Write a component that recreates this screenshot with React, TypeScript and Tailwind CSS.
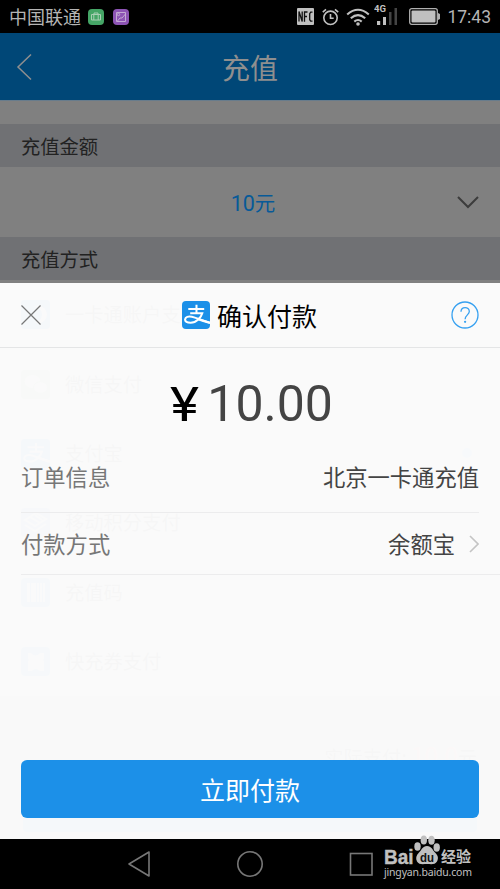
import type { ReactNode } from 'react'

function AlipayGlyph({ color = '#fff' }: { color?: string }) {
  return (
    <g fill="none" stroke={color}>
      <path strokeWidth="2.1" d="M6.500 8.300h16.500M15 4v8.500" />
      <path
        strokeWidth="2.1"
        d="M8.500 12.600H21c-1.200 4.200-6 10-12 10-3.800 0-6-1.300-5.800-3.600.3-2.400 3.300-3.600 7-2.700 5 1.200 10 3.700 18.800 6.200"
      />
      <path strokeWidth="2.500" d="M17 18.700c4 1.700 8 2.800 12 4" />
    </g>
  )
}

function Square({ className, children }: { className: string; children: ReactNode }) {
  return (
    <svg viewBox="0 0 29 29" className={`size-[29px] shrink-0 rounded ${className}`}>
      {children}
    </svg>
  )
}

const methods = [
  {
    name: '一卡通账户支付',
    icon: (
      <Square className="bg-[#004a80]">
        <circle cx="17" cy="14.500" r="9" fill="#808080" />
        <circle cx="13" cy="14.500" r="8" fill="#004a80" />
      </Square>
    ),
  },
  {
    name: '微信支付',
    icon: (
      <Square className="bg-[#4a7048]">
        <ellipse cx="11.500" cy="11.500" rx="8" ry="6.500" fill="#808080" />
        <ellipse cx="19.500" cy="17.500" rx="7" ry="5.800" fill="#808080" stroke="#4a7048" />
      </Square>
    ),
  },
  {
    name: '支付宝',
    checked: true,
    icon: (
      <Square className="bg-[#004a80]">
        <AlipayGlyph color="#808080" />
      </Square>
    ),
  },
  {
    name: '移动积分支付',
    icon: (
      <Square className="bg-[#3c5484]">
        <path
          d="M4 12l11-7 10 6-11 7-10-6zm0 5l10 6 11-7M9 9l10 6M14 7l7 5"
          fill="none"
          stroke="#808080"
          strokeWidth="2"
        />
      </Square>
    ),
  },
  {
    name: '充值码',
    icon: (
      <Square className="bg-[#1c5c84]">
        <path d="M6 5h3v19H6zM10 5h5v19h-5zM16 5h2v19h-2zM19 5h2v19h-2zM22 5h2v19h-2z" fill="#808080" />
      </Square>
    ),
  },
  {
    name: '快充券支付',
    icon: (
      <Square className="bg-[#1c5c84]">
        <path d="M7 6h3q4.500 5 9 0h4v6l-1 1 1 1v10h-4q-4.500-4-8 0H7V14l1-1-1-1z" fill="#808080" />
      </Square>
    ),
  },
]

function StatusBar() {
  return (
    <div className="flex h-[33px] items-center bg-black pl-[9px] pr-[9px] text-[#b4b4b4]">
      <span className="text-[18px] leading-[33px]">中国联通</span>
      <svg viewBox="0 0 16 16" className="ml-[7px] size-4 rounded bg-[#45a566]" fill="none" stroke="#a9cfb4">
        <path d="M3.500 5.500h9v5.500h-9zM6 5.500V4h4v1.500M5.800 5.500V11M10.200 5.500V11" />
      </svg>
      <svg viewBox="0 0 16 16" className="ml-[9px] size-4 rounded bg-[#8d54b5]" fill="none" stroke="#c3a9d4">
        <path d="M3.500 3.500h9v9h-9zM4.500 12l2.500-3h2l3.500-4" />
        <circle cx="5.500" cy="5.500" r="1.200" />
      </svg>

      <svg viewBox="0 0 17 17" className="ml-auto size-[17px]">
        <rect width="17" height="17" rx="1" fill="#c0c0c0" />
        <path
          d="M2 13.500V3.500l3.200 10v-10M7.500 13.700V4h3M7.500 8.500h2.500M15.500 4.200h-1.800l-1 1.500v6l1 1.500h1.800"
          fill="none"
          stroke="#111"
          strokeWidth="1.300"
        />
      </svg>
      <svg viewBox="0 0 17 18" className="ml-2 h-[18px] w-[17px]" fill="none" stroke="#c0c0c0" strokeWidth="1.600">
        <circle cx="8.500" cy="9.800" r="6.700" />
        <path d="M8.500 6v4.200h3.200M.8 4.200L4 1.400M16.200 4.200L13 1.400" />
      </svg>
      <svg viewBox="0 0 24 18" className="ml-[7px] h-[18px] w-6" fill="none" stroke="#c0c0c0" strokeWidth="2.100">
        <path d="M1.200 6.500q10.800-9.500 21.600 0M4.800 10.200q7.200-6.300 14.400 0M8.300 13.600q3.700-3.200 7.400 0" />
        <circle cx="12" cy="16" r="1.800" fill="#c0c0c0" stroke="none" />
      </svg>
      <svg viewBox="0 0 24 22" className="mb-[5px] ml-[4px] h-[22px] w-6">
        <text x="0" y="8.800" fontSize="9.500" fontWeight="700" fill="#c0c0c0" fontFamily="Roboto, sans-serif">
          4G
        </text>
        <path d="M3 18h3.200v4H3zM9 14h3v8H9z" fill="#c0c0c0" />
        <path d="M15 9h2.500v13H15zM20.500 5H23v17h-2.500z" fill="#444" />
      </svg>
      <svg viewBox="0 0 31 17" className="ml-[11px] h-[17px] w-[31px]">
        <rect x=".7" y=".7" width="27.600" height="15.600" rx="2" fill="none" stroke="#b0b0b0" strokeWidth="1.300" />
        <rect x="2.500" y="2.500" width="24" height="12" rx="1" fill="#c0c0c0" />
        <path d="M29 5l2 1v5l-2 1z" fill="#b0b0b0" />
      </svg>
      <span className="ml-[7px] pt-0.5 font-[Roboto] text-[17.500px] leading-[33px]">17:43</span>
    </div>
  )
}

function RechargePage() {
  return (
    <div className="flex h-[806px] flex-col bg-[#808080] text-[#222]">
      <header className="flex h-[67px] items-center bg-[#004777] text-[#8f8f8f]">
        <svg viewBox="0 0 16 28" className="ml-4 h-7 w-4" fill="none" stroke="currentColor" strokeWidth="1.500">
          <path d="M15 1.500L2 14l13 12.500" />
        </svg>
        <h1 className="flex-1 pr-8 text-center text-[28px] leading-none">充值</h1>
      </header>
      <div className="h-px bg-[#687c8c]" />
      <h2 className="mt-[23px] h-[43px] bg-[#707174] pl-[21px] text-[19.300px] leading-[45px]">充值金额</h2>
      <div className="flex h-[70px] items-center pl-[49px] pr-[21px]">
        <span className="flex-1 pt-[3px] text-center text-[20.500px] text-[#075a98]">
          <span className="font-[Roboto] text-[21.500px]">10</span>元
        </span>
        <svg viewBox="0 0 22 13" className="h-[13px] w-[22px]" fill="none" stroke="#3c3c3c" strokeWidth="2">
          <path d="M1 1l10 10L21 1" />
        </svg>
      </div>
      <h2 className="h-[43px] shrink-0 bg-[#707174] pl-[21px] text-[19.300px] leading-[45px]">充值方式</h2>
      <ul className="h-[416px] shrink-0">
        {methods.map((m) => (
          <li key={m.name} className="flex h-[69.400px] items-center pl-[21px] pr-[24px]">
            {m.icon}
            <span className="ml-[15px] flex-1 text-[19.300px]">{m.name}</span>
            <span className={`rounded-full ${m.checked ? 'mr-1 size-2.5 bg-[#40709a]' : 'size-5 bg-[#757575]'}`} />
          </li>
        ))}
      </ul>
      <footer className="flex flex-1 flex-col justify-end bg-[#747474] px-[23px] pb-[7px]">
        <div className="mb-1 text-right text-[19.300px]">
          实际支付: <span className="text-2xl text-[#a05050]">10.0</span>元
        </div>
        <div className="h-[56px] rounded bg-[#004777]" />
      </footer>
    </div>
  )
}

function PaySheet() {
  return (
    <section className="absolute inset-x-0 top-[283px] flex h-[556px] flex-col bg-white/96 text-[#444]">
      <header className="flex h-[65px] items-center border-b border-[#e4e5e6] px-[21px]">
        <svg viewBox="0 0 20 20" className="size-5" fill="none" stroke="#777" strokeWidth="1.200">
          <path d="M.5.5l19 19M19.500.5l-19 19" />
        </svg>
        <div className="flex flex-1 items-center justify-center gap-[7px] pl-[7px] text-black">
          <svg viewBox="0 0 29 29" className="size-7 rounded bg-[#1c90e8]">
            <AlipayGlyph />
          </svg>
          <h2 className="text-[25px] leading-none">确认付款</h2>
        </div>
        <svg viewBox="0 0 28 28" className="size-7" fill="none" stroke="#36a0f0" strokeWidth="1.300">
          <circle cx="14" cy="14" r="13" />
          <path d="M10 10.800c0-5.600 8.300-5.400 8.300-.3 0 3.300-4.200 3.600-4.200 7.800" />
          <circle cx="14.100" cy="20.800" r=".5" />
        </svg>
      </header>

      <div className="flex h-[95px] items-baseline justify-center gap-[12px] pl-[3px] pt-[31px] font-[Roboto]">
        <span className="origin-left scale-x-115 text-[48px] leading-none text-black">¥</span>
        <span className="text-[50px] leading-none">10.00</span>
      </div>

      <div className="mx-[21px] flex h-[70px] items-center justify-between border-b border-[#ececed] pb-px text-[22.300px]">
        <span className="text-[#777]">订单信息</span>
        <span>北京一卡通充值</span>
      </div>
      <div className="ml-[21px] flex h-[62px] items-center border-b border-[#ececed] pr-[21px] text-[22.300px]">
        <span className="flex-1 text-[#777]">付款方式</span>
        <span>余额宝</span>
        <svg viewBox="0 0 10 18" className="ml-[14px] h-[18px] w-[10px]" fill="none" stroke="#c4c4c4" strokeWidth="1.600">
          <path d="M1 1l8 8-8 8" />
        </svg>
      </div>

      <button className="mx-[21px] mb-[21px] mt-auto h-[58px] rounded-md bg-[#1c90e8] pt-0.5 text-[25px] text-white">
        立即付款
      </button>
    </section>
  )
}

function Watermark() {
  return (
    <svg viewBox="0 0 100 48" className="absolute -top-1 left-[380px] h-12 w-[100px]" fill="#c0c0c0">
      <g fontFamily="'Liberation Sans', sans-serif" fontWeight="700">
        <text
          x="4"
          y="28.500"
          fontSize="20"
          textLength="29.500"
          lengthAdjust="spacingAndGlyphs"
          stroke="#c0c0c0"
          strokeWidth=".4"
        >
          Bai
        </text>
        <ellipse cx="37.500" cy="11.500" rx="3.200" ry="4.200" />
        <ellipse cx="43.800" cy="5" rx="3.200" ry="4.500" />
        <ellipse cx="51.500" cy="5.300" rx="3.200" ry="4.500" />
        <ellipse cx="56.700" cy="12.500" rx="3.200" ry="4.200" />
        <path d="M47 11c4.500 0 5.500 4 8 6.500 3.500 3.500 3.500 6 2 9-2 3.500-6 2.500-10 2.500s-8 1-10-2.500c-1.500-3-1-6 2-9 2.800-2.500 3.500-6.500 8-6.500z" />
        <text x="40" y="26.500" fontSize="13" fill="#111" textLength="14" lengthAdjust="spacingAndGlyphs">
          du
        </text>
      </g>
      <text x="61" y="27" fontSize="15" fontWeight="700" fontFamily="'Noto Sans CJK SC', sans-serif">
        经验
      </text>
      <text x="4" y="40.500" fontSize="10.500" textLength="88" fontFamily="'Noto Sans', sans-serif">
        jingyan.baidu.com
      </text>
    </svg>
  )
}

function NavBar() {
  return (
    <nav className="relative flex h-[50px] bg-black">
      <svg viewBox="0 0 500 50" className="h-[50px] w-[500px]" fill="none" stroke="#777" strokeWidth="1.600">
        <path d="M129 25l20-12v24z" strokeLinejoin="round" />
        <circle cx="250" cy="25" r="12.200" />
        <rect x="350.500" y="14.500" width="21.500" height="21.500" />
      </svg>
      <Watermark />
    </nav>
  )
}

export default function App() {
  return (
    <div className="relative h-[889px] w-[500px] overflow-hidden bg-black font-['Noto_Sans_CJK_SC',sans-serif]">
      <StatusBar />
      <RechargePage />
      <PaySheet />
      <NavBar />
    </div>
  )
}
